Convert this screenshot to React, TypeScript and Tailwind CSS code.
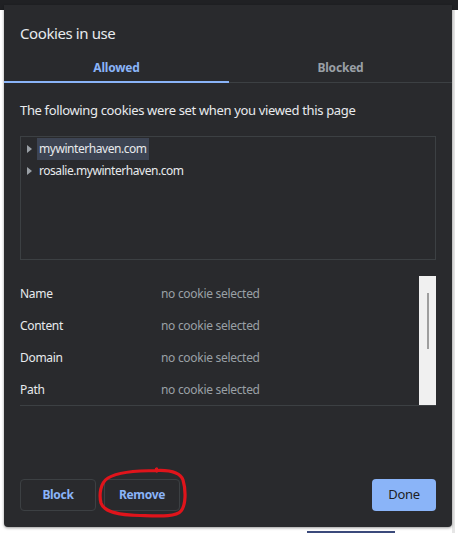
import React from "react";

const rows = ["Name", "Content", "Domain", "Path"];

function Triangle() {
  return (
    <svg width="5" height="8" viewBox="0 0 5 8" className="shrink-0">
      <path d="M0 0 L5 4 L0 8 Z" fill="#9aa0a6" />
    </svg>
  );
}

export default function App() {
  return (
    <div className="w-[458px] h-[533px] overflow-hidden bg-white font-['Noto_Sans',sans-serif] text-[#e8eaed]">
      <div className="h-[5px] bg-[#202124]" />
      <div className="flex">
        <div className="w-[4px] h-[528px] bg-white border-t-[5px] border-[#202124]" />
        <div className="relative w-[448px] h-[522px] bg-[#292a2d] rounded-b-[4px] shadow-[0_1px_3px_rgba(0,0,0,0.4)] flex flex-col">
          <div className="px-4 pt-[16px] h-[48px] text-[15px] leading-[25px] tracking-[-0.4px]">Cookies in use</div>

          <div className="flex h-[30px] text-[12px] font-bold tracking-[-0.2px]">
            <div className="w-[225px] flex items-center justify-center pt-[1px] text-[#8ab4f8] border-b-2 border-[#8ab4f8]">
              Allowed
            </div>
            <div className="flex-1 flex items-center justify-center pt-[1px] text-[#9aa0a6] border-b border-[#3c4043]">
              Blocked
            </div>
          </div>

          <div className="px-4 flex flex-col">
            <div className="mt-[17px] text-[13px] leading-[21px] tracking-[-0.35px]">
              The following cookies were set when you viewed this page
            </div>

            <div className="mt-[15px] h-[124px] border border-[#3c4043] text-[12px] tracking-[-0.45px]">
              <div className="flex items-center h-[22px] pl-[6px] gap-[5px] pt-[1px]">
                <Triangle />
                <span className="bg-[#3d4453] px-[2px] leading-[22px]">mywinterhaven.com</span>
              </div>
              <div className="flex items-center h-[22px] pl-[6px] gap-[5px] pt-[1px]">
                <Triangle />
                <span className="px-[2px] leading-[22px]">rosalie.mywinterhaven.com</span>
              </div>
            </div>

            <div className="mt-[16px] flex h-[130px] border-b border-[#3c4043]">
              <div className="flex-1 overflow-hidden text-[12px] tracking-[-0.3px] pt-[2px]">
                {rows.map((r) => (
                  <div key={r} className="flex items-center h-[32px]">
                    <span className="w-[141px]">{r}</span>
                    <span className="text-[#9aa0a6]">no cookie selected</span>
                  </div>
                ))}
              </div>
              <div className="w-[17px] bg-[#f0f0f0] pt-[17px] flex justify-center">
                <div className="w-[2px] h-[56px] bg-[#9e9e9e]" />
              </div>
            </div>
          </div>

          <div className="mt-auto px-4 pb-[16px] flex items-center text-[12px] tracking-[-0.3px]">
            <button className="w-[76px] h-[32px] rounded-[4px] border border-[#3c4043] text-[#8ab4f8] font-bold">
              Block
            </button>
            <button className="ml-[8px] w-[76px] h-[32px] rounded-[4px] border border-[#3c4043] text-[#8ab4f8] font-bold">
              Remove
            </button>
            <button className="ml-auto w-[64px] h-[32px] rounded-[4px] bg-[#8ab4f8] text-[#202124] text-[13px]">
              Done
            </button>
          </div>

          <svg
            className="absolute left-0 top-0 pointer-events-none"
            width="448"
            height="522"
            viewBox="4 5 448 522"
          >
            <path
              d="M157 470.5 C140 470.5, 118 472, 108 478 C100 483, 99 495, 101 503 C104 512, 118 515, 140 515.5 C160 516, 176 517, 181 511 C186 505, 186 490, 183 480 C180 472, 170 470, 157 470.5 M156.5 469 L157 471"
              fill="none"
              stroke="#e0141b"
              strokeWidth="3.2"
              strokeLinecap="round"
            />
          </svg>
        </div>
        <div className="w-[6px] h-[528px] bg-white border-t-[5px] border-[#202124] flex">
          <div className="w-[3px] bg-[#e6e6e6]" />
        </div>
      </div>
      <div className="flex -mt-[2px] h-[10px]">
        <div className="ml-[307px] w-[88px] h-[4px] bg-[#3b4a7b]" />
      </div>
    </div>
  );
}
